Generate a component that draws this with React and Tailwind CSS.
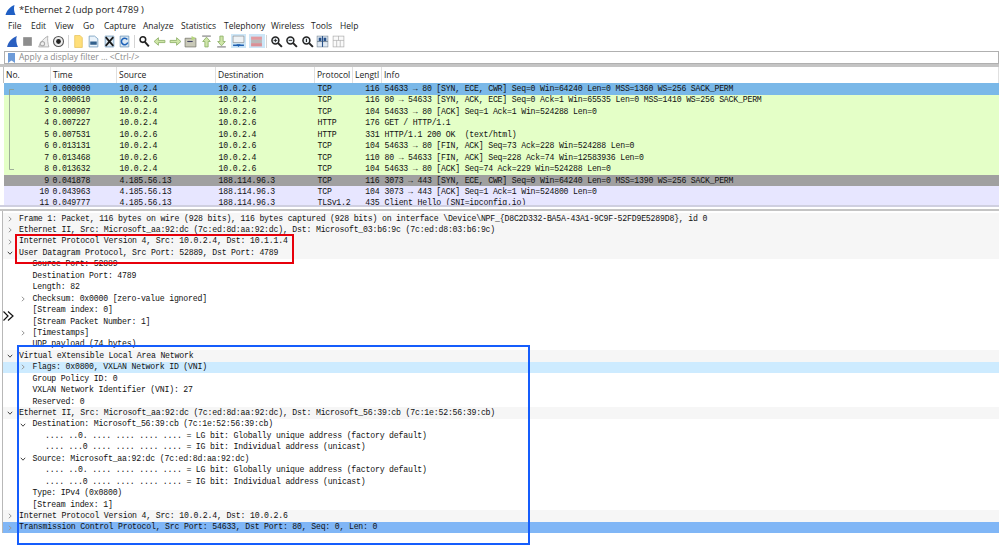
import React from "react";

const packets = [
  ["1","0.000000","10.0.2.4","10.0.2.6","TCP","116","54633 → 80 [SYN, ECE, CWR] Seq=0 Win=64240 Len=0 MSS=1360 WS=256 SACK_PERM","bg-[#7ab8e8]"],
  ["2","0.000610","10.0.2.6","10.0.2.4","TCP","116","80 → 54633 [SYN, ACK, ECE] Seq=0 Ack=1 Win=65535 Len=0 MSS=1410 WS=256 SACK_PERM","bg-[#e4ffc7]"],
  ["3","0.000907","10.0.2.4","10.0.2.6","TCP","104","54633 → 80 [ACK] Seq=1 Ack=1 Win=524288 Len=0","bg-[#e4ffc7]"],
  ["4","0.007227","10.0.2.4","10.0.2.6","HTTP","176","GET / HTTP/1.1","bg-[#e4ffc7]"],
  ["5","0.007531","10.0.2.6","10.0.2.4","HTTP","331","HTTP/1.1 200 OK  (text/html)","bg-[#e4ffc7]"],
  ["6","0.013131","10.0.2.4","10.0.2.6","TCP","104","54633 → 80 [FIN, ACK] Seq=73 Ack=228 Win=524288 Len=0","bg-[#e4ffc7]"],
  ["7","0.013468","10.0.2.6","10.0.2.4","TCP","110","80 → 54633 [FIN, ACK] Seq=228 Ack=74 Win=12583936 Len=0","bg-[#e4ffc7]"],
  ["8","0.013632","10.0.2.4","10.0.2.6","TCP","104","54633 → 80 [ACK] Seq=74 Ack=229 Win=524288 Len=0","bg-[#e4ffc7]"],
  ["9","0.041878","4.185.56.13","188.114.96.3","TCP","116","3073 → 443 [SYN, ECE, CWR] Seq=0 Win=64240 Len=0 MSS=1390 WS=256 SACK_PERM","bg-[#a0a0a0]"],
  ["10","0.043963","4.185.56.13","188.114.96.3","TCP","104","3073 → 443 [ACK] Seq=1 Ack=1 Win=524800 Len=0","bg-[#e7e6ff]"],
  ["11","0.049777","4.185.56.13","188.114.96.3","TLSv1.2","435","Client Hello (SNI=ipconfig.io)","bg-[#e7e6ff]"],
];

const details = [
  [0,">","Frame 1: Packet, 116 bytes on wire (928 bits), 116 bytes captured (928 bits) on interface \\Device\\NPF_{D8C2D332-BA5A-43A1-9C9F-52FD9E5289D8}, id 0","bg-[#f6f6f6]"],
  [0,">","Ethernet II, Src: Microsoft_aa:92:dc (7c:ed:8d:aa:92:dc), Dst: Microsoft_03:b6:9c (7c:ed:d8:03:b6:9c)","bg-[#f6f6f6]"],
  [0,">","Internet Protocol Version 4, Src: 10.0.2.4, Dst: 10.1.1.4","bg-[#f6f6f6]"],
  [0,"v","User Datagram Protocol, Src Port: 52889, Dst Port: 4789","bg-[#f6f6f6]"],
  [1,"","Source Port: 52889"],
  [1,"","Destination Port: 4789"],
  [1,"","Length: 82"],
  [1,">","Checksum: 0x0000 [zero-value ignored]"],
  [1,"","[Stream index: 0]"],
  [1,"","[Stream Packet Number: 1]"],
  [1,">","[Timestamps]"],
  [1,"","UDP payload (74 bytes)"],
  [0,"v","Virtual eXtensible Local Area Network","bg-[#f6f6f6]"],
  [1,">","Flags: 0x0800, VXLAN Network ID (VNI)","bg-[#cdebff]"],
  [1,"","Group Policy ID: 0"],
  [1,"","VXLAN Network Identifier (VNI): 27"],
  [1,"","Reserved: 0"],
  [0,"v","Ethernet II, Src: Microsoft_aa:92:dc (7c:ed:8d:aa:92:dc), Dst: Microsoft_56:39:cb (7c:1e:52:56:39:cb)","bg-[#f6f6f6]"],
  [1,"v","Destination: Microsoft_56:39:cb (7c:1e:52:56:39:cb)"],
  [2,"",".... ..0. .... .... .... .... = LG bit: Globally unique address (factory default)"],
  [2,"",".... ...0 .... .... .... .... = IG bit: Individual address (unicast)"],
  [1,"v","Source: Microsoft_aa:92:dc (7c:ed:8d:aa:92:dc)"],
  [2,"",".... ..0. .... .... .... .... = LG bit: Globally unique address (factory default)"],
  [2,"",".... ...0 .... .... .... .... = IG bit: Individual address (unicast)"],
  [1,"","Type: IPv4 (0x0800)"],
  [1,"","[Stream index: 1]"],
  [0,">","Internet Protocol Version 4, Src: 10.0.2.4, Dst: 10.0.2.6","bg-[#f6f6f6]"],
  [0,">","Transmission Control Protocol, Src Port: 54633, Dst Port: 80, Seq: 0, Len: 0","bg-[#80b6f6]"],
];

const menus = [["File","w-[23px]"],["Edit","w-[24px]"],["View","w-[28px]"],["Go","w-[21px]"],["Capture","w-[39px]"],["Analyze","w-[38px]"],["Statistics","w-[43px]"],["Telephony","w-[47px]"],["Wireless","w-[40px]"],["Tools","w-[29px]"],["Help","w-[24px]"]];

const Ico = ({ children, active }) => (
  <span className={`flex h-[14px] w-[15.5px] shrink-0 items-center justify-center ${active ? "bg-[#cde6f7]" : ""}`}>
    <svg width="13" height="13" viewBox="0 0 12 12" fill="none">{children}</svg>
  </span>
);
const Sep = () => <span className="mx-[1.5px] h-[13px] w-px shrink-0 bg-[#d4d4d4]" />;
const Arrow = ({ d }) => <path d={d} fill="#cfe6a8" stroke="#8fb06a" strokeWidth=".8" />;
const Mag = ({ sign }) => (
  <>
    <circle cx="5" cy="5" r="3.2" fill="#e8eef2" stroke="#222" strokeWidth="1.4" />
    <path d="M7.5 7.5 11 11" stroke="#222" strokeWidth="1.8" />
    {sign !== "1" && <path d="M3.4 5h3.2" stroke="#222" strokeWidth=".8" />}
    {sign === "+" && <path d="M5 3.4v3.2" stroke="#222" strokeWidth=".8" />}
    {sign === "1" && <path d="M5 3.5v3" stroke="#222" strokeWidth="1" />}
  </>
);

function Toolbar() {
  return (
    <div className="flex h-[18px] items-center pb-[2px] pl-[4.5px]">
      <Ico><path d="M1 11C2 7 5 3 10 1c-1 3-.5 7 1 10z" fill="#2a5fc0" /></Ico>
      <Ico><rect x="2" y="2" width="8" height="8" fill="#8d8d8d" /></Ico>
      <Ico><path d="M1.5 11C3 7 6 3 10 1c-.5 3 0 7 1 10z" fill="#eee" stroke="#aaa" strokeWidth=".8" /><circle cx="5" cy="8" r="2" stroke="#aaa" /></Ico>
      <Ico><circle cx="6" cy="6" r="4.6" fill="#eee" stroke="#555" /><circle cx="6" cy="6" r="2.2" fill="#222" /></Ico>
      <Sep />
      <Ico><path d="M2.5 .5h5l2 2v9h-7z" fill="#ffdf7a" stroke="#e6c25c" strokeWidth=".7" /></Ico>
      <Ico><path d="M2 1h5l3 2.5V11H2z" fill="#eaf3fb" stroke="#6a94b8" strokeWidth=".7" /><rect x="3" y="6" width="6" height="3" fill="#33608c" /></Ico>
      <Ico><path d="M2 1h8v10H2z" fill="#dbe8f3" stroke="#6a94b8" strokeWidth=".7" /><path d="M2.5 2 9.5 10M9.5 2 2.5 10" stroke="#1b1b1b" strokeWidth="1.7" /></Ico>
      <Ico><path d="M2 1h8v10H2z" fill="#dbe8f3" stroke="#6a94b8" strokeWidth=".7" /><path d="M8.6 4.2A3 3 0 1 0 9 7" stroke="#1e62b8" strokeWidth="1.4" /></Ico>
      <Sep />
      <Ico><circle cx="4.5" cy="4.2" r="2.6" fill="#fff" stroke="#222" strokeWidth="1.4" /><path d="M6.3 6.3 10 10.5" stroke="#222" strokeWidth="1.8" /></Ico>
      <Ico><Arrow d="M1 6l4-3.5V5h6v2H5v2.5z" /></Ico>
      <Ico><Arrow d="M11 6 7 2.5V5H1v2h6v2.5z" /></Ico>
      <Ico><path d="M1 3h10v8H1z" fill="#c9c9b8" stroke="#77776a" strokeWidth=".7" /><path d="M3 6h5" stroke="#446" /><path d="M7 1l4 2-4 2z" fill="#b6d77e" /></Ico>
      <Ico><path d="M2 1h8" stroke="#777" /><Arrow d="M6 2l3.5 4H7.5v5h-3V6H2.5z" /></Ico>
      <Ico><path d="M2 11h8" stroke="#777" /><Arrow d="M6 10 2.5 6h2V1h3v5h2z" /></Ico>
      <span className="w-[1px]" />
      <Ico active><path d="M1 1h10v6H1z" fill="#eef2f5" stroke="#777" strokeWidth=".5" /><path d="M1 9.5h10" stroke="#1e5fb0" strokeWidth="1.4" /><path d="M4 8.5h4l-2 2.5z" fill="#1e5fb0" /></Ico>
      <span className="w-[3px]" />
      <Ico active><rect x="1" y="1.5" width="10" height="3" fill="#e29aa0" /><rect x="1" y="4.5" width="10" height="3" fill="#b9b9b9" /><rect x="1" y="7.5" width="10" height="3" fill="#d98f95" /></Ico>
      <Sep />
      <Ico><Mag sign="+" /></Ico>
      <Ico><Mag sign="-" /></Ico>
      <Ico><Mag sign="1" /></Ico>
      <Ico><rect x="1" y="1" width="10" height="10" fill="#dfe9f3" stroke="#7b8b9a" strokeWidth=".6" /><path d="M1 6h10" stroke="#7b8b9a" /><rect x="2.5" y="2.5" width="2.5" height="3" fill="#27518a" /><rect x="7" y="2.5" width="2.5" height="3" fill="#27518a" /><path d="M6 1v10" stroke="#27518a" /></Ico>
      <Ico><rect x="1" y="1" width="10" height="10" fill="#fafafa" stroke="#a8a8a8" strokeWidth=".6" /><path d="M1 5h10M4.3 5v6M7.6 5v6M6 1v4" stroke="#a8a8a8" strokeWidth=".6" /></Ico>
    </div>
  );
}

function Row({ p }) {
  return (
    <div className={`flex h-[11.46px] items-center whitespace-pre ${p[7]}`}>
      <span className="w-[45.5px] shrink-0 text-right">{p[0]}</span>
      <span className="ml-[3.5px] w-[67px] shrink-0">{p[1]}</span>
      <span className="w-[99px] shrink-0">{p[2]}</span>
      <span className="w-[99px] shrink-0">{p[3]}</span>
      <span className="w-[47px] shrink-0">{p[4]}</span>
      <span className="w-[15px] shrink-0 text-right">{p[5]}</span>
      <span className="ml-[5px]">{p[6]}</span>
    </div>
  );
}

function Caret({ kind }) {
  if (!kind) return <span className="w-[6px] shrink-0" />;
  return (
    <svg width="6" height="6" viewBox="0 0 6 6" className="shrink-0" fill="none" stroke={kind === "v" ? "#444" : "#999"} strokeWidth="1">
      {kind === "v" ? <path d="M.8 1.8 3 4.2 5.2 1.8" /> : <path d="M1.8.8 4.2 3 1.8 5.2" />}
    </svg>
  );
}

const headers = [["No.","w-[47px]"],["Time","w-[66px]"],["Source","w-[99px]"],["Destination","w-[99px]"],["Protocol","w-[38px]"],["Lengtl","w-[29px]"],["Info","flex-1"]];

export default function App() {
  return (
    <div className="relative h-[547px] w-[999px] overflow-hidden bg-white font-['Liberation_Sans','Open_Sans',sans-serif] text-[#111]">
      <div className="flex h-[19px] items-center pl-[4px] pt-[1px]">
        <svg width="13" height="12" viewBox="0 0 12 12"><path d="M1 11C2 7 5 3 10 1c-1 3-.5 7 1 10z" fill="#1f5fc4" /></svg>
        <span className="ml-[2px] text-[9.5px] leading-none font-['Open_Sans',sans-serif] text-[#222]">*Ethernet 2 (udp port 4789 )</span>
      </div>
      <div className="flex h-[14px] items-center pl-[8px] text-[8.5px] font-['Open_Sans',sans-serif] text-[#222]">
        {menus.map(([m, w]) => <span key={m} className={`${w} shrink-0`}>{m}</span>)}
      </div>
      <Toolbar />
      <div className="ml-[4px] mr-0 flex h-[13px] items-center border border-[#b0b0b0] bg-white">
        <svg width="7" height="10" viewBox="0 0 7 10" className="ml-[3px]"><path d="M0 0h7v10L3.5 7.5 0 10z" fill="#6d9bd8" /></svg>
        <span className="ml-[4px] text-[8.5px] font-['Open_Sans',sans-serif] text-[#8a8a8a]">Apply a display filter … &lt;Ctrl-/&gt;</span>
      </div>
      <div className="h-[3px] bg-[#c4c4c4]" />

      <div className="ml-[3px] border-l border-[#bdbdbd]">
        <div className="flex h-[16.3px] items-center text-[8.5px] font-['Open_Sans',sans-serif] text-[#222]">
          {headers.map(([h, w]) => (
            <span key={h} className={`${w} h-full shrink-0 overflow-hidden whitespace-nowrap border-r border-[#e0e0e0] pl-[2px] leading-[16px]`}>{h}</span>
          ))}
        </div>
      </div>
      <div className="relative h-[122px] overflow-hidden pl-[3.5px] font-['Liberation_Mono',monospace] text-[8.2px] tracking-[-0.2px] text-[#111]">
        {packets.map((p) => <Row key={p[0]} p={p} />)}
        <svg width="8" height="82" viewBox="0 0 8 82" className="absolute left-[8px] top-[5.5px]" fill="none" stroke="#8c9a8c" strokeWidth=".8"><path d="M6 .5H1.5v80H6" /></svg>
      </div>
      <div className="h-[1.7px] bg-[#cfcfe0]" />
      <div className="h-[2px] bg-white" />
      <div className="h-[2px] bg-[#c4c4c4]" />

      <div className="ml-[2px] border-l border-[#b8b8b8] pt-[2px] font-['Liberation_Mono',monospace] text-[8.2px] tracking-[-0.2px] text-[#111]">
        {details.map((d, i) => (
          <div key={i} className={`flex h-[11.45px] items-center whitespace-pre ${d[3] || ""}`}>
            <span className={`flex shrink-0 ${d[0] === 0 ? "w-[15.5px] pl-[4px]" : d[0] === 1 ? "w-[27px] pl-[17px]" : "w-[42px]"}`}>
              {d[0] < 2 && <Caret kind={d[1]} />}
            </span>
            <span className={d[0] === 0 ? "pl-[0.5px]" : d[0] === 1 ? "pl-[2.5px]" : ""}>{d[2]}</span>
          </div>
        ))}
      </div>

      <div className="absolute left-[15px] top-[234px] h-[30px] w-[279px] border-2 border-solid border-red-600" />
      <div className="absolute left-[17px] top-[345px] h-[199.5px] w-[513px] border-2 border-solid border-blue-600" />
      <svg width="11" height="10" viewBox="0 0 11 10" fill="none" stroke="#111" strokeWidth="1.2" className="absolute left-[3px] top-[311px]"><path d="M.5.5 5 5 .5 9.5M5 .5 10 5 5 9.5" /></svg>
    </div>
  );
}
